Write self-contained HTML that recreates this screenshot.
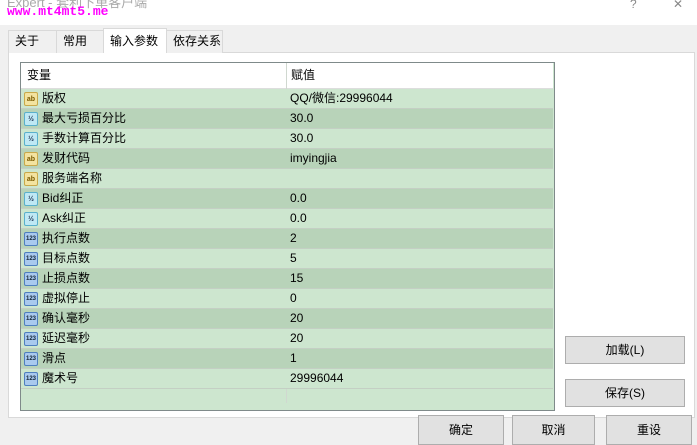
<!DOCTYPE html><html><head><meta charset="utf-8"><style>
*{box-sizing:border-box;margin:0;padding:0}
body{width:697px;height:444px;overflow:hidden;background:#f0f0f0;font-family:"Liberation Sans","Noto Sans CJK SC",sans-serif;font-size:12px;color:#000;position:relative}
.abs{position:absolute}
.title{left:0;top:0;width:697px;height:25px;background:#fff}
.tab{position:absolute;top:30px;height:23px;border:1px solid #d9d9d9;border-bottom:none;background:#f0f0f0;padding:0 0 0 6px;line-height:21px;font-size:12px}
.panel{left:8px;top:52px;width:687px;height:366px;background:#fff;border:1px solid #d9d9d9}
.tbl{left:20px;top:62px;width:535px;height:349px;border:1px solid #7f8a8a;background:#cde6cf}
.row{position:absolute;left:0;width:532px;height:20px;border-bottom:1px solid #c4cfc4}
.row span{position:absolute;top:0;line-height:19px;height:19px}
.ic{position:absolute;left:3px;top:3px;width:14px;height:14px;border-radius:2px;font-size:7px;line-height:13px;text-align:center;font-weight:bold}
.btn{position:absolute;background:#e1e1e1;border:1px solid #adadad;text-align:center;font-size:12px}
</style></head><body>
<div class="abs title"></div>
<div class="abs" style="left:7px;top:-5px;color:#aaa;font-size:13px;line-height:16px">Expert - 套利下单客户端</div>
<div class="abs" style="left:7px;top:5px;color:#f0f;font-family:'Liberation Mono',monospace;font-weight:bold;font-size:13px;line-height:14px">www.mt4mt5.me</div>
<div class="abs" style="left:630px;top:-3px;color:#888">?</div>
<div class="abs" style="left:673px;top:-3px;color:#888">✕</div>
<div class="abs panel"></div>
<div class="tab" style="left:8px;width:49px">关于</div>
<div class="tab" style="left:56px;width:48px">常用</div>
<div class="tab" style="left:103px;width:64px;top:28px;height:25px;background:#fff;line-height:24px">输入参数</div>
<div class="tab" style="left:166px;width:57px">依存关系</div>
<div class="abs tbl">
<div class="row" style="top:0;height:26px;background:#fff;border-bottom:1px solid #ddd"><span style="left:6px;line-height:25px;height:25px">变量</span><span style="left:270px;line-height:25px;height:25px">赋值</span></div>
<div class="abs" style="left:265px;top:0;width:1px;height:340px;background:#d0d8d0"></div>
<div id="rows"></div>
</div>
<script>
var d=[["ab","版权","QQ/微信:29996044"],["h","最大亏损百分比","30.0"],["h","手数计算百分比","30.0"],["ab","发财代码","imyingjia"],["ab","服务端名称",""],["h","Bid纠正","0.0"],["h","Ask纠正","0.0"],["n","执行点数","2"],["n","目标点数","5"],["n","止损点数","15"],["n","虚拟停止","0"],["n","确认毫秒","20"],["n","延迟毫秒","20"],["n","滑点","1"],["n","魔术号","29996044"]];
var h="";d.forEach(function(r,i){var bg=i%2?"#b8d3b9":"#cde6cf";var ic=r[0]=="ab"?'<div class="ic" style="background:#f3e3a0;border:1px solid #c9a94a;color:#7a5a00">ab</div>':r[0]=="h"?'<div class="ic" style="background:#bfe8f4;border:1px solid #5ab0cc;color:#235">½</div>':'<div class="ic" style="background:#a9c9ee;border:1px solid #4f7fbf;color:#123;font-size:6px">123</div>';
h+='<div class="row" style="top:'+(26+i*20)+'px;background:'+bg+'">'+ic+'<span style="left:21px">'+r[1]+'</span><span style="left:269px">'+r[2]+'</span></div>'});
document.getElementById("rows").outerHTML=h;
</script>
<div class="btn" style="left:565px;top:336px;width:120px;height:28px;line-height:26px">加载(L)</div>
<div class="btn" style="left:565px;top:379px;width:120px;height:28px;line-height:26px">保存(S)</div>
<div class="btn" style="left:418px;top:415px;width:86px;height:30px;line-height:28px">确定</div>
<div class="btn" style="left:512px;top:415px;width:83px;height:30px;line-height:28px">取消</div>
<div class="btn" style="left:606px;top:415px;width:86px;height:30px;line-height:28px">重设</div>
</body></html>
